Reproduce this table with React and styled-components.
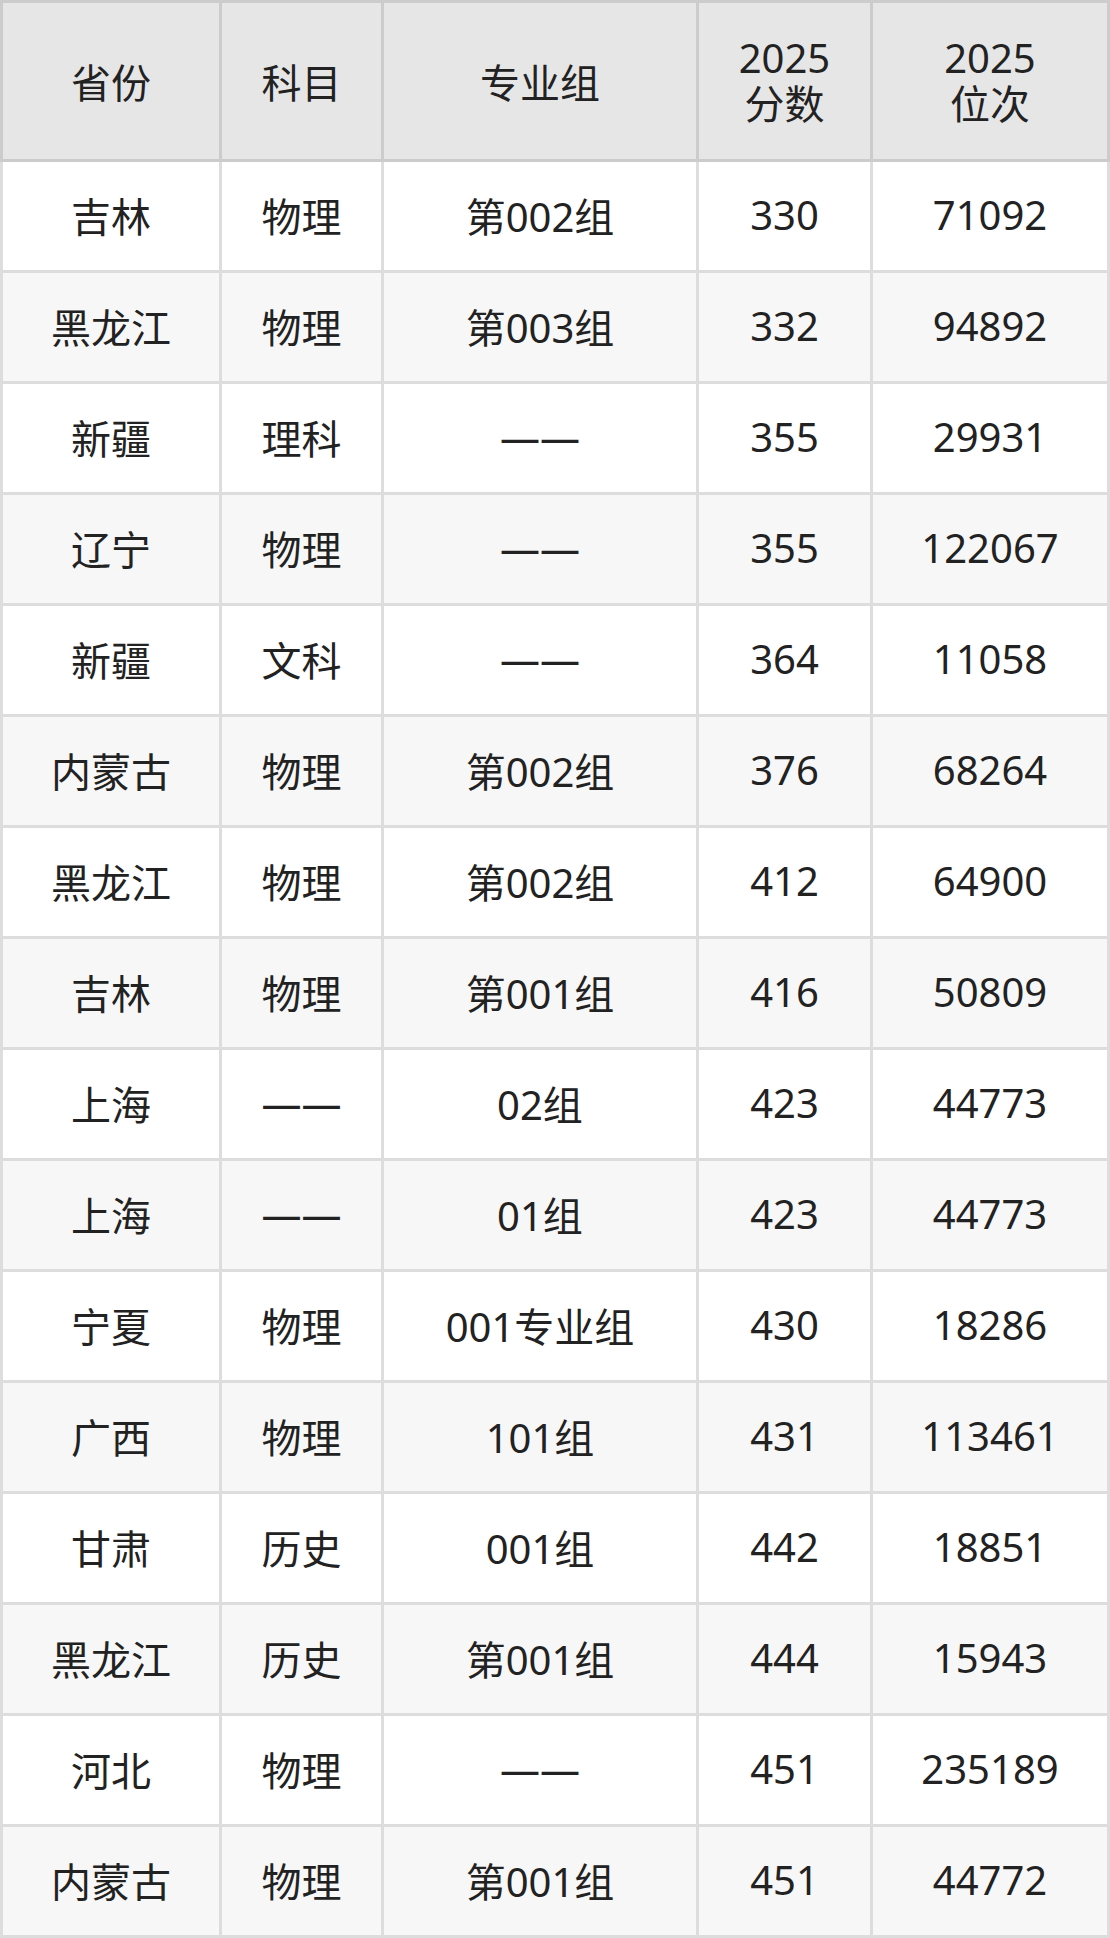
import React from 'react';
import styled, { createGlobalStyle } from 'styled-components';

const GlobalStyle = createGlobalStyle`
  html, body {
    margin: 0;
    padding: 0;
    background: #ffffff;
  }
  body {
    font-family: "Noto Sans", "Noto Sans CJK SC", sans-serif;
    color: #222222;
  }
`;

const COLS = '216px 159px 312px 171px 234px';

const Table = styled.div`
  display: flex;
  flex-direction: column;
  width: 1110px;
`;

const Head = styled.div`
  display: grid;
  grid-template-columns: ${COLS};
  gap: 3px;
  padding: 3px;
  background: #cccccc;
`;

const Body = styled.div`
  display: grid;
  grid-template-columns: ${COLS};
  grid-auto-rows: 108px;
  gap: 3px;
  padding: 0 3px 3px;
  background: #dddddd;
`;

const HeadCell = styled.div`
  height: 156px;
  display: flex;
  flex-direction: column;
  align-items: center;
  justify-content: center;
  text-align: center;
  background: #e6e6e6;
  font-size: 40px;
  color: #222222;
`;

const HeadLine = styled.span`
  display: block;
  height: 46px;
  line-height: 46px;
`;

const Cell = styled.div`
  display: flex;
  align-items: center;
  justify-content: center;
  padding-bottom: 3px;
  background: ${({ $striped }) => ($striped ? '#f7f7f7' : '#ffffff')};
  font-size: 40px;
  color: #222222;
  white-space: nowrap;
`;

const rows = [
  ['吉林', '物理', '第002组', '330', '71092'],
  ['黑龙江', '物理', '第003组', '332', '94892'],
  ['新疆', '理科', '——', '355', '29931'],
  ['辽宁', '物理', '——', '355', '122067'],
  ['新疆', '文科', '——', '364', '11058'],
  ['内蒙古', '物理', '第002组', '376', '68264'],
  ['黑龙江', '物理', '第002组', '412', '64900'],
  ['吉林', '物理', '第001组', '416', '50809'],
  ['上海', '——', '02组', '423', '44773'],
  ['上海', '——', '01组', '423', '44773'],
  ['宁夏', '物理', '001专业组', '430', '18286'],
  ['广西', '物理', '101组', '431', '113461'],
  ['甘肃', '历史', '001组', '442', '18851'],
  ['黑龙江', '历史', '第001组', '444', '15943'],
  ['河北', '物理', '——', '451', '235189'],
  ['内蒙古', '物理', '第001组', '451', '44772'],
];

export default function App() {
  return (
    <>
      <GlobalStyle />
      <Table>
        <Head>
          <HeadCell>省份</HeadCell>
          <HeadCell>科目</HeadCell>
          <HeadCell>专业组</HeadCell>
          <HeadCell>
            <HeadLine>2025</HeadLine>
            <HeadLine>分数</HeadLine>
          </HeadCell>
          <HeadCell>
            <HeadLine>2025</HeadLine>
            <HeadLine>位次</HeadLine>
          </HeadCell>
        </Head>
        <Body>
          {rows.map((row, i) =>
            row.map((value, j) => (
              <Cell key={`${i}-${j}`} $striped={i % 2 === 1}>
                {value}
              </Cell>
            ))
          )}
        </Body>
      </Table>
    </>
  );
}
